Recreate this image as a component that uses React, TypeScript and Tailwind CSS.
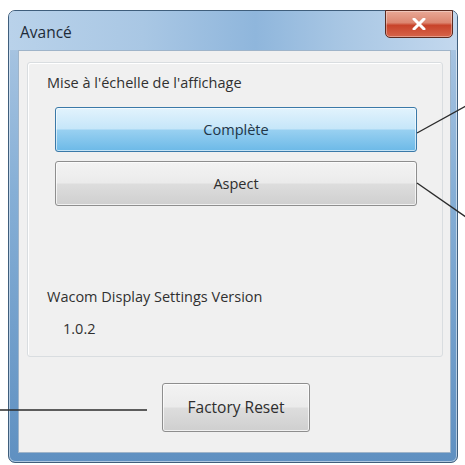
import React from 'react';

const Connectors = () => (
  <svg
    className="absolute inset-0 pointer-events-none"
    width={465}
    height={465}
    viewBox="0 0 465 465"
  >
    <g stroke="#2b2b2b" strokeWidth={1.4} fill="none">
      <line x1={417} y1={133} x2={466} y2={106} />
      <line x1={417} y1={183} x2={466} y2={217} />
      <line x1={0} y1={410} x2={147} y2={410} />
    </g>
  </svg>
);

export default function App() {
  return (
    <div className="relative w-[465px] h-[465px] bg-white overflow-hidden pt-[10px] pl-[8px] font-['Open_Sans',sans-serif]">
      {/* window */}
      <div className="w-[450px] h-[453px] rounded-[7px] border border-[#3f5e7c] bg-[linear-gradient(180deg,#b4cde6_0%,#a4c2e0_10%,#86afd6_40%,#5f90c1_100%)] flex flex-col shadow-[inset_0_0_0_1px_rgba(255,255,255,0.5)]">
        {/* title bar */}
        <div className="h-[39px] flex flex-row justify-between items-start rounded-t-[6px] bg-[linear-gradient(90deg,#b9d2ea_0%,#a9c7e4_30%,#8fb6dc_55%,#a9c7e4_75%,#c3d8ee_100%)]">
          <span className="pl-[11px] pt-[11px] text-[15.5px] leading-[20px] text-[#1e2b38]">
            Avancé
          </span>
          <div className="-mt-px mr-[4px] w-[68px] h-[28px] rounded-b-[5px] border border-[#5b2a20] bg-[linear-gradient(180deg,#e9a896_0%,#dc8670_45%,#c8432a_55%,#d6644a_100%)] flex items-center justify-center shadow-[inset_0_0_0_1px_rgba(255,255,255,0.35)]">
            <svg width={14} height={12} viewBox="0 0 14 12">
              <path
                d="M2 1 L12 11 M12 1 L2 11"
                stroke="#ffffff"
                strokeWidth={3}
                strokeLinecap="round"
              />
            </svg>
          </div>
        </div>

        {/* client area */}
        <div className="ml-[9px] mr-[6px] h-[403px] border border-[#9fb4c9] bg-[#f0f0f0] flex flex-col pt-[11px] pl-[8px]">
          {/* group box */}
          <div className="w-[416px] h-[295px] rounded-[3px] border border-[#d9dde0] shadow-[inset_1px_1px_0_#ffffff] flex flex-col text-[14.5px] text-[#303030]">
            <span className="pl-[19px] pt-[10px] leading-[20px]">
              Mise à l'échelle de l'affichage
            </span>
            <div className="ml-[27px] mt-[14px] w-[362px] flex flex-col gap-[9px]">
              <button className="h-[45px] rounded-[3px] border border-[#3a79a8] bg-[linear-gradient(180deg,#e2f3fd_0%,#c6e6f9_48%,#98d0f1_52%,#6cb9e7_100%)] shadow-[inset_0_0_0_1px_rgba(255,255,255,0.6)] text-[14.5px] text-[#213547]">
                Complète
              </button>
              <button className="h-[45px] rounded-[3px] border border-[#8e8e8e] bg-[linear-gradient(180deg,#f3f3f3_0%,#ebebeb_48%,#dddddd_52%,#cfcfcf_100%)] shadow-[inset_0_0_0_1px_rgba(255,255,255,0.7)] text-[14.5px] text-[#2e2e2e]">
                Aspect
              </button>
            </div>
            <span className="pl-[19px] mt-[81px] leading-[20px]">
              Wacom Display Settings Version
            </span>
            <span className="pl-[35px] mt-[12px] leading-[20px]">1.0.2</span>
          </div>

          {/* factory reset */}
          <div className="flex flex-row mt-[26px]">
            <button className="ml-[135px] w-[148px] h-[49px] rounded-[3px] border border-[#8e8e8e] bg-[linear-gradient(180deg,#f3f3f3_0%,#ebebeb_48%,#dddddd_52%,#cfcfcf_100%)] shadow-[inset_0_0_0_1px_rgba(255,255,255,0.7)] text-[15.5px] text-[#2e2e2e]">
              Factory Reset
            </button>
          </div>
        </div>
      </div>

      <Connectors />
    </div>
  );
}
